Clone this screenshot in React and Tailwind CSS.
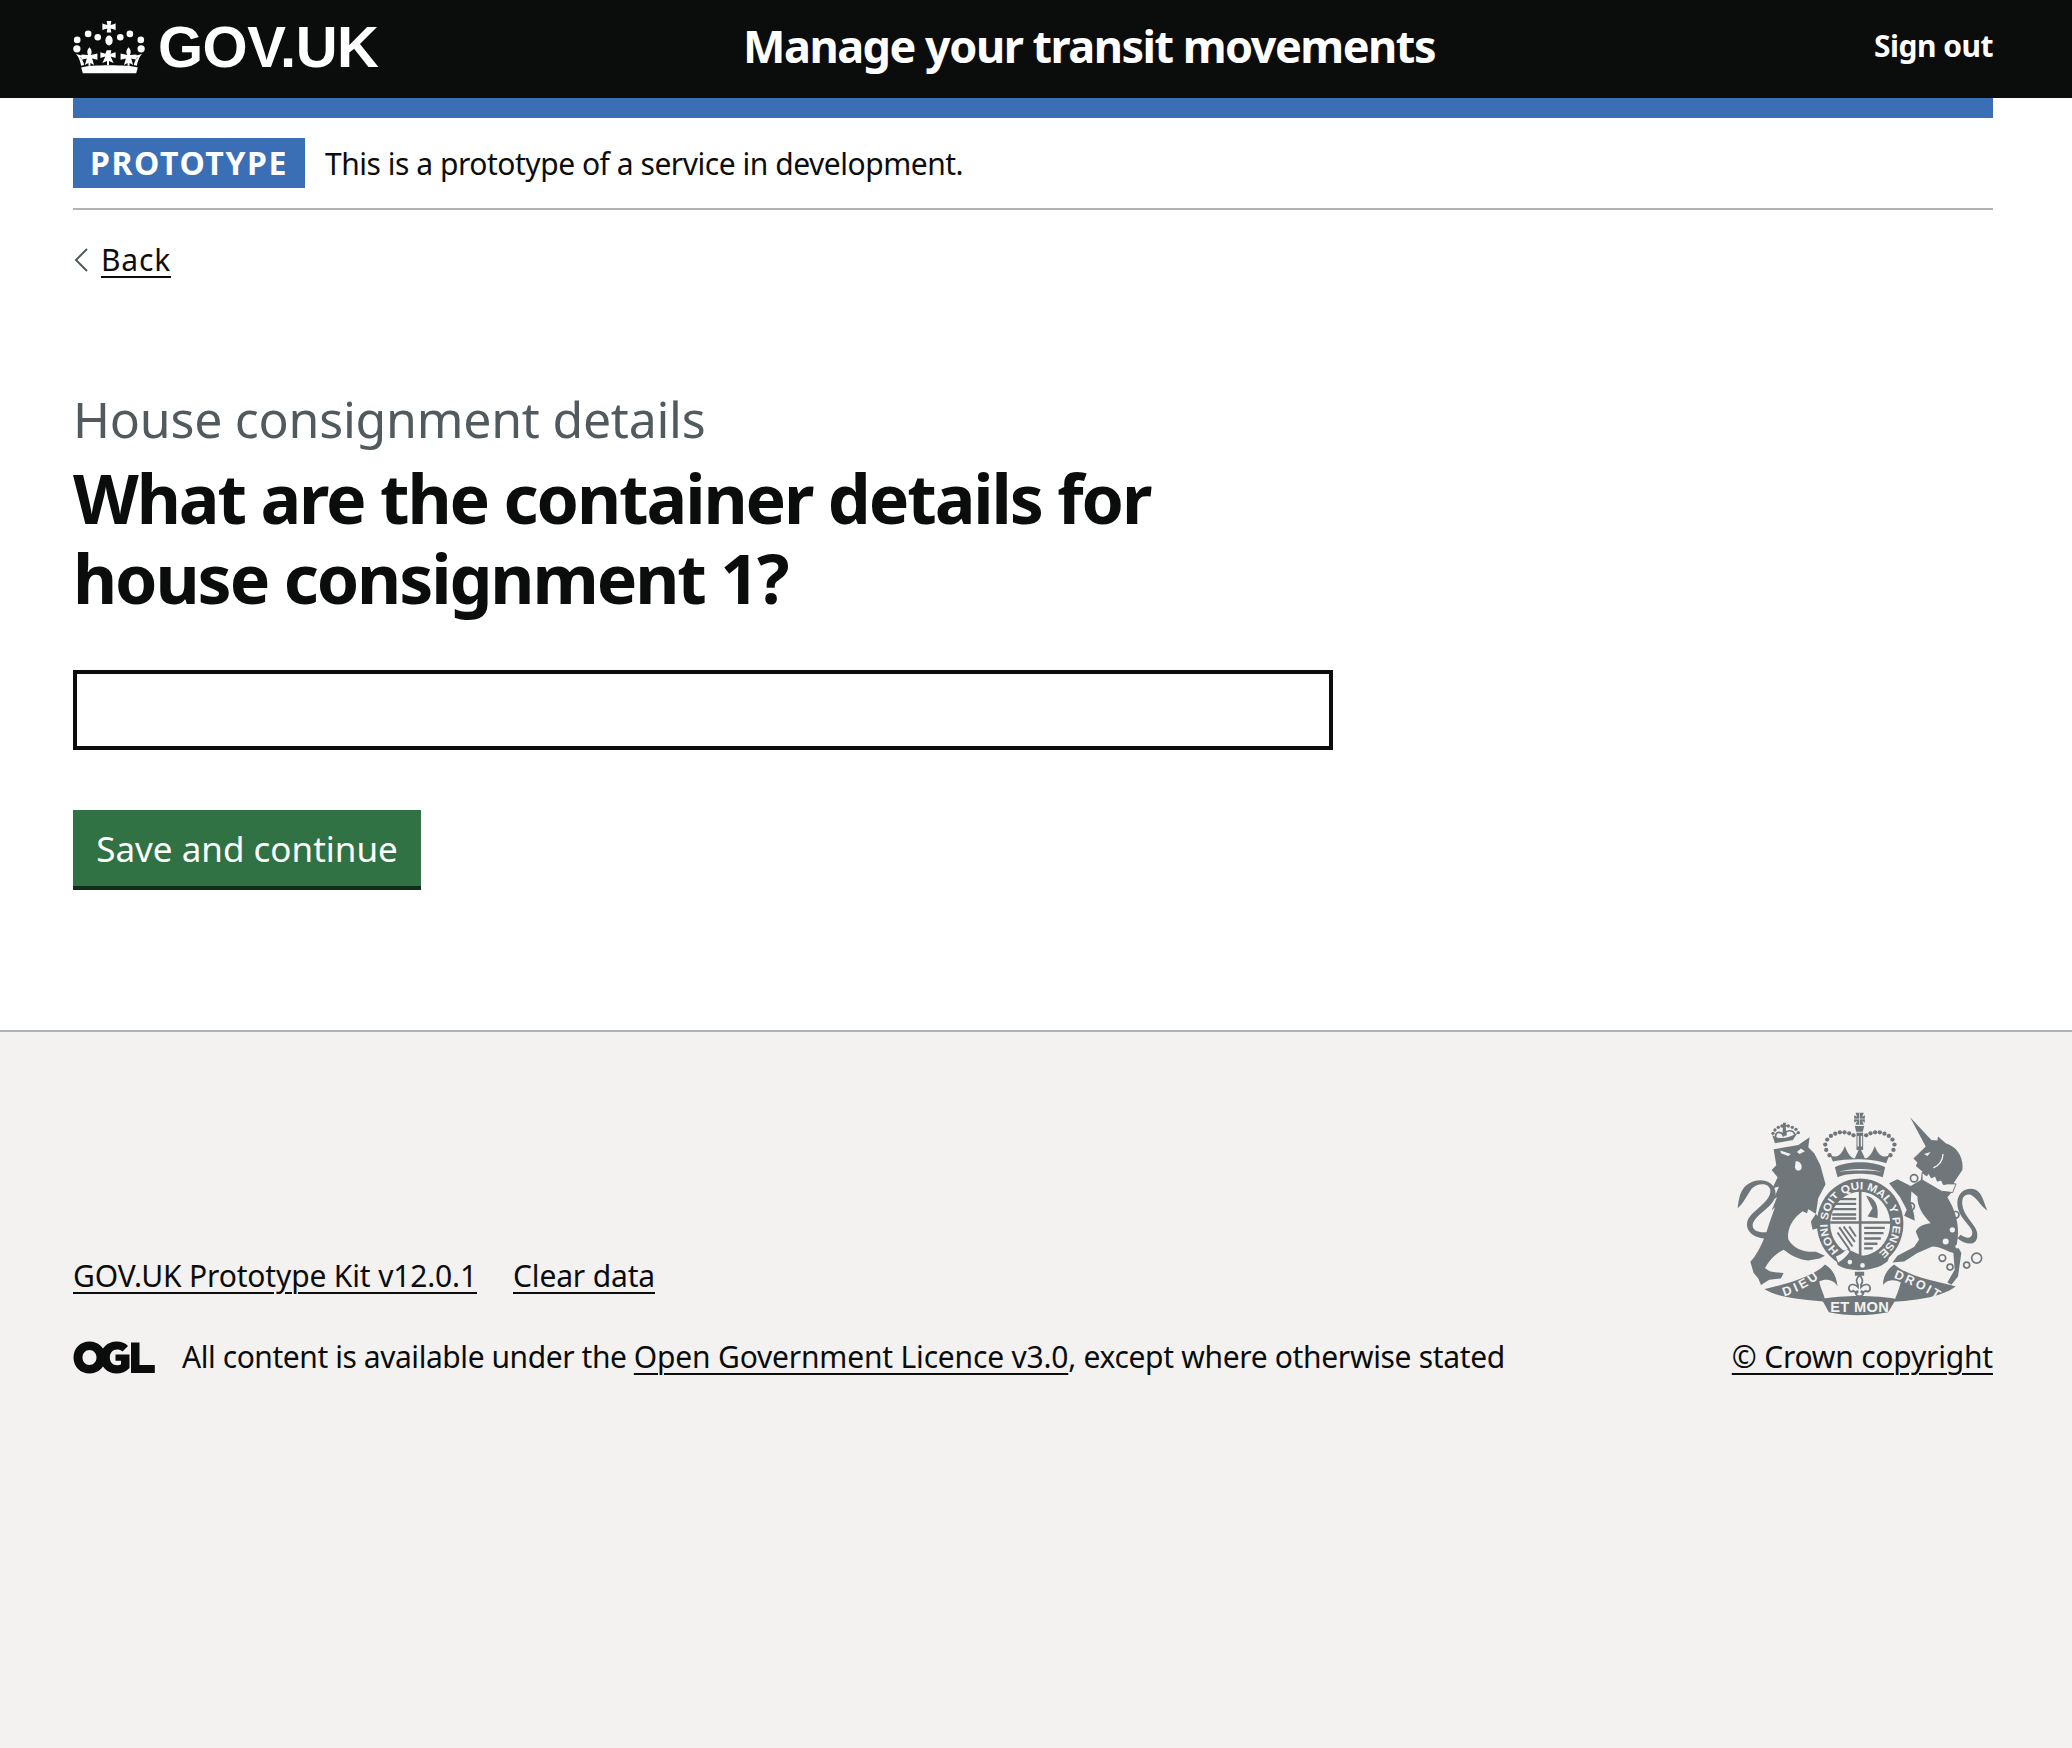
import React from 'react';

const archDots = [
  [386, 196], [376, 180], [373, 164], [379, 149], [390, 138], [403, 131], [417, 127], [431, 127], [445, 130], [458, 136],
  [569, 196], [578, 180], [581, 164], [575, 149], [564, 138], [551, 131], [537, 127], [523, 127], [509, 130], [496, 136],
];

const lionCrownDots = [
  [216, 130], [222, 120], [232, 112], [243, 108], [262, 108], [274, 112], [285, 118], [292, 128],
];

const CrownLogo = ({ className }) => (
  <svg viewBox="219 57 216 160" className={className} aria-hidden="true">
    <g fill="#fff">
      <path d="M320 57 h14 l-2 12 l11 -3 l4 -2 v21 l-4 -2 l-11 -3 l2 12 h-14 l2 -12 l-11 3 l-4 2 v-21 l4 2 l11 3 z" />
      <ellipse cx="327" cy="116" rx="11" ry="15" />
      <circle cx="293" cy="106" r="10" />
      <circle cx="361" cy="106" r="10" />
      <circle cx="264" cy="96" r="10" />
      <circle cx="390" cy="96" r="10" />
      <circle cx="231" cy="114" r="10" />
      <circle cx="423" cy="114" r="10" />
      <circle cx="230" cy="141" r="11" />
      <circle cx="424" cy="141" r="11" />
      <path d="M248 215 L409 215 L414 197 C385 188 270 188 243 197 Z" />
      <path d="M226 156 C232 160 238 170 243 192 L252 190 C250 180 246 172 238 166 L252 172 L250 162 L238 160 Z" />
      <path d="M428 156 C422 160 416 170 411 192 L402 190 C404 180 408 172 416 166 L402 172 L404 162 L416 160 Z" />
      <path d="M320 145 h14 l-2 11 l15 -5 v18 l-15 -5 l9 20 l-14 -6 l-0 12 h-6 l-0 -12 l-14 6 l9 -20 l-15 5 v-18 l15 5 z" />
      <path d="M268 136 C276 144 276 152 272 160 L292 155 V174 L276 170 L282 190 L271 184 V192 H265 V184 L254 190 L260 170 L244 174 V158 L264 160 C260 152 260 144 268 136 Z" />
      <path d="M386 136 C394 144 394 152 390 160 L410 158 V174 L394 170 L400 190 L389 184 V192 H383 V184 L372 190 L378 170 L362 174 V155 L382 160 C378 152 378 144 386 136 Z" />
    </g>
  </svg>
);

const OglLogo = () => (
  <svg viewBox="0 0 82 33" className="w-[82px] h-[33px] shrink-0" aria-hidden="true">
    <g fill="#0b0c0c">
      <path fillRule="evenodd" d="M16.5 0.5 C25.5 0.5 32.5 7.2 32.5 16.5 C32.5 25.8 25.5 32.5 16.5 32.5 C7.5 32.5 0.5 25.8 0.5 16.5 C0.5 7.2 7.5 0.5 16.5 0.5 Z M16.5 9 C12.5 9 9.5 12.2 9.5 16.5 C9.5 20.8 12.5 24 16.5 24 C20.5 24 23.5 20.8 23.5 16.5 C23.5 12.2 20.5 9 16.5 9 Z" />
      <path fillRule="evenodd" d="M43.5 0.5 C48.5 0.5 52.5 2.2 55 5 L49.5 10.5 C48 9.2 46 8.6 44 8.6 C39.8 8.6 36.8 12 36.8 16.5 C36.8 21 39.8 24.2 44 24.2 C45.5 24.2 47 23.8 48 23.2 V19.8 H42.5 V13.5 H56.5 V27 C53 30.8 48.5 32.5 43.5 32.5 C34.5 32.5 27.5 25.8 27.5 16.5 C27.5 7.2 34.5 0.5 43.5 0.5 Z" />
      <path d="M58 1.5 H66.5 V24 H81.8 V32 H58 Z" />
    </g>
  </svg>
);

const CoatOfArms = ({ className }) => (
  <svg viewBox="100 60 770 625" className={className} aria-hidden="true">
    <g fill="#6f777b">
      {/* lion */}
      <path d="M218 178 L292 165 L326 142 L322 172 L340 190 L358 225 L374 283 L352 325 L345 372 C335 366 330 362 322 358 L318 370 L305 364 L296 372 C270 392 258 425 262 448 C278 478 310 488 345 486 L372 498 L356 506 L322 512 C292 510 268 495 248 480 C225 490 205 510 192 535 C210 552 232 546 248 550 L240 566 L205 570 L180 586 L172 566 L158 550 L148 516 C172 490 190 450 205 400 L222 352 L212 362 L228 322 L218 328 L234 290 L214 296 L230 262 L212 240 L226 226 Z" />
      <path d="M205 445 C170 450 135 430 138 400 C142 365 212 340 208 300 C204 276 165 279 152 297 C138 316 125 345 110 355 C113 325 118 295 145 280 C175 262 222 272 224 310 C226 350 160 372 155 405 C153 425 180 432 210 425 Z" />
      <path d="M345 372 L385 425 L372 430 L350 415 L335 420 L330 395 Z" />
      {/* lion face */}
      <path d="M238 182 L270 192 L262 198 L240 190 Z M300 176 L312 184 L296 192 L288 186 Z" fill="#f3f2f1" />
      <path d="M284 214 C296 212 304 224 302 234 C298 246 284 244 282 232 Z" fill="#f3f2f1" />
      {/* lion crown */}
      <path d="M222 160 L214 136 C235 150 262 146 290 128 L276 150 Z" />
      <path d="M246 98 H256 L254 104 L262 106 L254 112 L258 136 L244 140 L246 112 L238 110 L246 104 Z" />
      <path d="M224 142 C222 128 236 120 248 136 C256 118 276 118 282 134" fill="none" stroke="#6f777b" strokeWidth="5" />
      {lionCrownDots.map(([cx, cy], i) => (
        <circle key={i} cx={cx} cy={cy} r="5" />
      ))}
      {/* top crown */}
      <path d="M464 68 H489 L484 80 L492 76 V98 L484 92 L489 104 H464 L469 92 L460 98 V76 L469 80 Z" />
      <path d="M476 68 V104 M460 87 H492" stroke="#f3f2f1" strokeWidth="2" />
      <path d="M462 108 H490 L486 125 H466 Z" />
      <path d="M467 128 H487 V180 H467 Z" />
      <path d="M472 138 V170 M482 138 V170" stroke="#f3f2f1" strokeWidth="4" />
      <path d="M396 215 L388 196 C405 205 420 200 432 168 C442 195 452 205 462 205 L477 172 L492 205 C502 205 512 195 522 168 C534 200 549 205 566 196 L556 220 C515 205 440 205 396 215 Z" />
      <path d="M402 232 C440 212 515 212 553 232 L546 262 C510 248 440 248 410 262 Z" />
      <path d="M412 246 C450 234 505 234 544 246 C505 240 450 240 412 246 Z" fill="#f3f2f1" />
      {archDots.map(([cx, cy], i) => (
        <circle key={i} cx={cx} cy={cy} r="6.5" />
      ))}
      {/* garter ring with motto */}
      <path fillRule="evenodd" d="M478 266 A130 136 0 1 1 477.9 266 Z M478 306 A90 96 0 1 0 478.1 306 Z" />
      <path d="M402 496 L440 478 L520 515 L570 490 L560 515 C520 548 440 548 410 525 Z" />
      <path id="garter-path" d="M414 482 A98 104 0 1 1 542 482" fill="none" />
      <text fill="#f3f2f1" fontFamily="'Liberation Sans', sans-serif" fontWeight="700" fontSize="33">
        <textPath href="#garter-path" textLength="505" lengthAdjust="spacingAndGlyphs">HONI SOIT QUI MAL Y PENSE</textPath>
      </text>
      <path d="M405 500 C420 495 430 488 438 478 L446 486 C438 500 424 512 412 518 Z" fill="#f3f2f1" />
      <circle cx="447" cy="517" r="7" fill="#f3f2f1" />
      <circle cx="485" cy="527" r="7" fill="#f3f2f1" />
      {/* shield quarters */}
      <path d="M474 300 H482 V500 H474 Z M388 394 H568 V402 H388 Z" />
      <path d="M404 328 H466 M398 342 H466 M394 358 H466 M394 374 H466 M394 386 H466 M490 414 H552 M490 430 H548 M490 446 H540 M490 462 H530 M490 476 H516" stroke="#6f777b" strokeWidth="7" fill="none" />
      <path d="M496 318 C520 322 535 345 530 385 L500 380 L515 355 Z" />
      <path d="M415 412 L455 470 M428 410 L462 456 M410 428 L446 480 M445 410 L465 440" stroke="#6f777b" strokeWidth="6" fill="none" />
      {/* unicorn */}
      <path d="M628 82 L692 150 L710 152 L712 140 L735 160 C770 170 790 205 785 240 L760 278 L760 300 L740 322 C770 370 778 420 768 465 L782 490 L772 560 L752 585 L740 578 L762 540 L758 490 C730 480 715 470 695 470 L650 490 L610 515 L575 518 L590 498 L640 472 L655 450 L645 425 C655 405 675 402 690 400 C665 375 650 350 650 320 L632 305 L630 335 L640 375 L642 393 L610 378 L618 360 L598 322 L565 280 L590 268 L630 288 L660 270 L665 245 L645 228 L650 218 L638 206 L675 170 Z" />
      <path d="M770 340 C770 305 800 290 825 300 C845 310 850 340 860 362 C840 350 830 325 810 315 C795 310 782 320 785 345 C790 385 835 410 830 440 C826 470 795 465 770 445 L780 435 C795 445 812 450 815 430 C818 410 770 385 770 340 Z" />
      <path d="M664 248 L678 258 L684 250 L692 264 L704 258 L710 274 L722 270 L728 284 L740 282 L766 282 L756 308 L722 304 L664 270 Z" fill="#f3f2f1" stroke="#6f777b" strokeWidth="3" />
      <g fill="#f3f2f1">
        <circle cx="735" cy="455" r="9" />
        <circle cx="755" cy="420" r="8" />
        <circle cx="770" cy="470" r="6" />
        <path d="M670 192 L690 186 L680 198 Z" />
      </g>
      <path d="M727 192 C726 210 716 226 698 234" fill="none" stroke="#f3f2f1" strokeWidth="4" />
      <g fill="none" stroke="#6f777b" strokeWidth="5">
        <circle cx="640" cy="265" r="11" />
        <circle cx="630" cy="350" r="11" />
        <circle cx="765" cy="375" r="10" />
        <circle cx="725" cy="505" r="10" />
        <circle cx="748" cy="532" r="9" />
        <circle cx="798" cy="526" r="9" />
        <circle cx="828" cy="505" r="15" />
      </g>
      {/* motto ribbon */}
      <path d="M190 598 C250 585 340 560 372 524 C395 535 408 565 410 590 C400 570 375 565 355 575 C360 600 375 625 372 636 C330 630 240 630 190 598 Z" />
      <path d="M765 590 C710 575 620 560 580 524 C555 540 545 570 547 585 C560 570 580 568 600 578 C595 600 585 620 580 636 C630 632 720 625 765 590 Z" />
      <path d="M362 628 C420 616 530 616 586 628 L562 668 C500 680 440 680 384 668 Z" />
      <g fill="#f3f2f1" fontFamily="'Liberation Sans', sans-serif" fontWeight="700" fontSize="38">
        <path id="ribbon-left" d="M250 620 C285 608 322 592 352 566" fill="none" />
        <text><textPath href="#ribbon-left" textLength="118">DIEU</textPath></text>
        <path id="ribbon-right" d="M578 564 C620 580 665 600 708 628" fill="none" />
        <text><textPath href="#ribbon-right" textLength="146">DROIT</textPath></text>
        <text x="388" y="666" fontSize="44" textLength="176">ET MON</text>
      </g>
      <rect x="462" y="546" width="28" height="12" />
      <path
        transform="translate(476 588) scale(1.45)"
        d="M0 -22 C8 -14 7 -7 3 -2 L3 3 C8 -3 20 -6 22 4 C23 12 15 15 12 9 C13 14 6 14 4 10 L4 14 L8 16 C5 24 -5 24 -8 16 L-4 14 L-4 10 C-6 14 -13 14 -12 9 C-15 15 -23 12 -22 4 C-20 -6 -8 -3 -3 3 L-3 -2 C-7 -7 -8 -14 0 -22 Z"
        fill="#f3f2f1"
        stroke="#6f777b"
        strokeWidth="3.5"
      />
    </g>
  </svg>
);

const App = () => {
  return (
    <div className="min-h-[1748px] flex flex-col bg-white text-[#0b0c0c] font-['Noto_Sans',sans-serif]">
      {/* Header */}
      <header className="h-[98px] bg-[#0b0c0c] text-white flex items-center pl-[73px] pr-[79px] pb-[4px]">
        <div className="w-[670px] flex items-center gap-[13px]">
          <CrownLogo className="w-[72px] h-[53px] shrink-0" />
          <span className="font-['Liberation_Sans',sans-serif] font-bold text-[58px] leading-none tracking-[-0.5px]">GOV.UK</span>
        </div>
        <span className="pb-[3px] font-bold text-[45px] leading-none tracking-[-1.5px]">Manage your transit movements</span>
        <a className="ml-auto pb-[2px] font-bold text-[30px] leading-none tracking-[-0.5px]">Sign out</a>
      </header>

      <div className="pl-[73px] pr-[79px]">
        <div className="h-[20px] bg-[#3a6fb5]"></div>

        {/* Phase banner */}
        <div className="pt-[20px] pb-[20px] border-b-2 border-[#b1b4b6] flex items-center gap-[20px]">
          <strong className="h-[50px] w-[232px] bg-[#3a6fb5] text-white flex items-center justify-center font-bold text-[32px] tracking-[1.6px]">PROTOTYPE</strong>
          <span className="pt-[2px] text-[30px] leading-[48px] tracking-[-0.47px]">This is a prototype of a service in development.</span>
        </div>

        {/* Back link */}
        <a className="mt-[30px] flex items-center gap-[11px] text-[30px] leading-[40px]">
          <svg viewBox="0 0 17 24" className="w-[17px] h-[24px]" aria-hidden="true">
            <path d="M14 1 L3 12 L14 23" fill="none" stroke="#505a5f" strokeWidth="2" />
          </svg>
          <span className="underline underline-offset-[5px] decoration-2 tracking-[0.8px]">Back</span>
        </a>

        {/* Question */}
        <main className="pt-[111px] pb-[140px]">
          <span className="block text-[#505a5f] text-[50px] leading-[56px] tracking-[-0.25px]">House consignment details</span>
          <h1 className="mt-[11px] w-[1260px] font-bold text-[68px] leading-[80px] tracking-[-2.1px]">
            What are the container details for house consignment 1?
          </h1>
          <input type="text" className="mt-[52px] block w-[1260px] h-[80px] border-4 border-[#0b0c0c] bg-white" />
          <button className="mt-[60px] h-[80px] w-[348px] bg-[#317244] border-b-[4px] border-[#0f2e1a] text-white text-[35px] leading-none">
            Save and continue
          </button>
        </main>
      </div>

      {/* Footer */}
      <footer className="flex-1 bg-[#f3f2f1] border-t-2 border-[#b1b4b6] pl-[73px] pr-[79px] pt-[78px]">
        <div className="flex items-end justify-between">
          <div>
            <div className="flex gap-[36px] text-[30px] leading-[40px] tracking-[-0.16px]">
              <a className="underline underline-offset-[5px] decoration-2">GOV.UK Prototype Kit v12.0.1</a>
              <a className="underline underline-offset-[5px] decoration-2">Clear data</a>
            </div>
            <div className="mt-[41px] flex items-center gap-[27px]">
              <OglLogo />
              <span className="text-[30px] leading-[40px] tracking-[-0.33px]">
                <span className="tracking-[-0.44px]">All content is available under the </span>
                <a className="underline underline-offset-[5px] decoration-2 tracking-[-0.19px]">Open Government Licence v3.0</a>, except where otherwise stated
              </span>
            </div>
          </div>
          <div className="flex flex-col items-center">
            <CoatOfArms className="w-[257px] h-[208px]" />
            <a className="mt-[19px] text-[30px] leading-[40px] tracking-[-0.2px] underline underline-offset-[5px] decoration-2">© Crown copyright</a>
          </div>
        </div>
      </footer>
    </div>
  );
};

export default App;
